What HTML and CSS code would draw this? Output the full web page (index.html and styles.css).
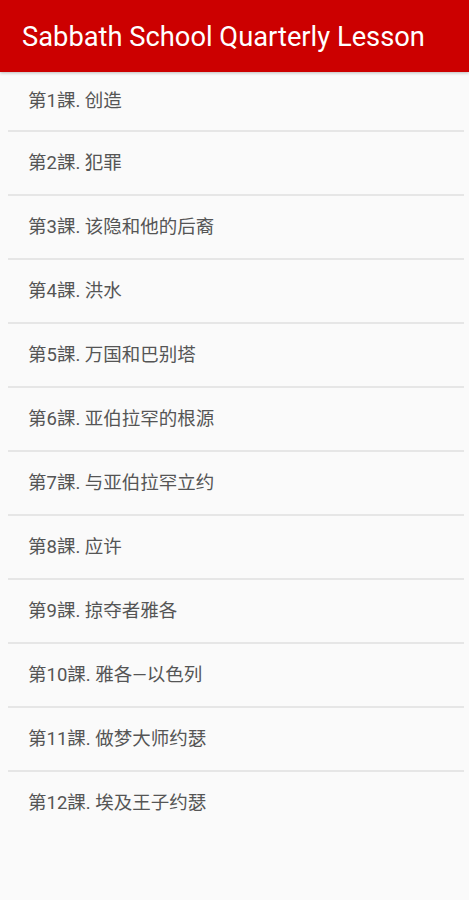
FILE: index.html
```html
<!DOCTYPE html>
<html>
	<head>
		<meta charset="UTF-8">
		<title>Sabbath School Quarterly Lesson</title>
		<link rel="stylesheet" href="styles.css">
	</head>
	<body>
		<div class="bar">Sabbath School Quarterly Lesson</div>
		<ul class="list">
			<li>第1課. 创造</li>
			<li>第2課. 犯罪</li>
			<li>第3課. 该隐和他的后裔</li>
			<li>第4課. 洪水</li>
			<li>第5課. 万国和巴别塔</li>
			<li>第6課. 亚伯拉罕的根源</li>
			<li>第7課. 与亚伯拉罕立约</li>
			<li>第8課. 应许</li>
			<li>第9課. 掠夺者雅各</li>
			<li>第10課. 雅各—以色列</li>
			<li>第11課. 做梦大师约瑟</li>
			<li>第12課. 埃及王子约瑟</li>
		</ul>
	</body>
</html>
```

FILE: styles.css
```css
*{
	margin: 0;
	padding: 0;
}
body{
	background: #fafafa;
	font-family: Roboto, "Noto Sans CJK SC", sans-serif;
}
.bar{
	height: 72px;
	line-height: 74px;
	padding-left: 22px;
	background: #cc0000;
	color: white;
	font-size: 27.3px;
	box-shadow: 0 1px 3px rgba(0,0,0,0.25);
}
.list{
	list-style: none;
}
.list li{
	height: 62px;
	line-height: 62px;
	margin: 0 5px 0 8px;
	padding-left: 20px;
	border-bottom: 2px solid #e6e6e6;
	font-size: 18.5px;
	color: #555;
}
.list li:first-child{
	height: 58px;
	line-height: 58px;
}
.list li:last-child{
	border-bottom: none;
}
```
